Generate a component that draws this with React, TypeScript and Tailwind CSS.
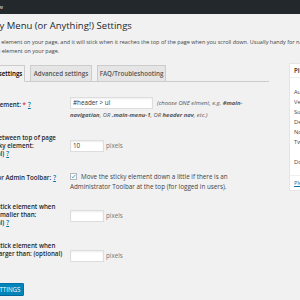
const Help = () => <a className="text-[#0073aa] underline ml-[2px]">?</a>

const Pixels = () => <span className="ml-[2px] text-[#777] text-[6.3px]">pixels</span>

function TextBox({ value, w }: { value?: string; w: string }) {
  return (
    <div className={`${w} h-[12px] bg-white border border-[#ddd] shadow-[inset_0_1px_2px_rgba(0,0,0,0.07)] flex items-center px-[2px] text-[6.3px] text-[#32373c] shrink-0`}>
      {value}
    </div>
  )
}

export default function App() {
  return (
    <div className="w-[300px] h-[300px] overflow-hidden bg-[#f1f1f1] font-['Open_Sans',sans-serif] text-[#444]">
      <div className="h-[14px] bg-[#23282d] flex items-center text-[#eee] text-[5.7px] whitespace-nowrap">
        <span className="-ml-[9px]">New</span>
      </div>

      <div className="-ml-[21px] w-[460px]">
        <h1 className="mt-[6px] text-[9.5px] leading-[12px] text-[#23282d] whitespace-nowrap">
          Sticky Menu (or Anything!) Settings
        </h1>
        <p className="mt-[6px] text-[5.5px] leading-[9px] whitespace-nowrap">
          Pick any element on your page, and it will stick when it reaches the top of the page when you scroll down. Usually handy for navigation menus, but can be any
          <br />
          (unique) element on your page.
        </p>

        <div className="mt-[7px] flex items-start">
          <div className="w-[290px] shrink-0">
            {/* tabs */}
            <div className="mt-[2px] flex items-end border-b border-[#ccc] text-[6.2px] font-semibold whitespace-nowrap">
              <div className="w-[46px] h-[17px] -mb-px border border-[#ccc] border-b-[#f1f1f1] bg-[#f1f1f1] text-[#000] flex items-center justify-center">
                Basic settings
              </div>
              <div className="ml-[5px] w-[62px] h-[17px] -mb-px border border-[#ccc] bg-[#e5e5e5] text-[#555] flex items-center justify-center">
                Advanced settings
              </div>
              <div className="ml-[5px] w-[69px] h-[17px] -mb-px border border-[#ccc] bg-[#e5e5e5] text-[#555] flex items-center justify-center">
                FAQ/Troubleshooting
              </div>
            </div>

            {/* form */}
            <div className="text-[6.2px] leading-[8px] whitespace-nowrap">
              <div className="mt-[15px] flex">
                <div className="-ml-[3.5px] w-[94.5px] pt-[4px] font-semibold text-[#23282d]">
                  Sticky Element: <span className="text-[#dc3232]">*</span>
                  <Help />
                </div>
                <div>
                  <div className="flex items-center">
                    <TextBox value="#header > ul" w="w-[83px]" />
                    <span className="ml-[4px] italic text-[5.9px] text-[#555]">
                      (choose ONE elment, e.g. <b>#main-</b>
                    </span>
                  </div>
                  <div className="mt-[2px] italic text-[5.9px] text-[#555]">
                    <b>navigation</b>, OR <b>.main-menu-1</b>, OR <b>header nav</b>, etc.)
                  </div>
                </div>
              </div>

              <div className="mt-[15px] flex">
                <div className="-ml-[3.5px] w-[94.5px] font-semibold text-[#23282d]">
                  Space between top of page
                  <br />
                  and sticky element:
                  <br />
                  (optional)
                  <Help />
                </div>
                <div className="pt-[6px] flex items-start">
                  <div className="flex items-center">
                    <TextBox value="10" w="w-[34px]" />
                    <Pixels />
                  </div>
                </div>
              </div>

              <div className="mt-[14px] flex">
                <div className="-ml-[3.5px] w-[94.5px] pt-[2px] font-semibold text-[#23282d]">
                  Check for Admin Toolbar:
                  <Help />
                </div>
                <div className="text-[6.3px] leading-[10px] text-[#444]">
                  <span className="inline-flex align-middle -mt-[2px] w-[7px] h-[7px] mr-[4px] bg-white border border-[#b4b9be] items-center justify-center">
                    <svg viewBox="0 0 10 10" className="w-[7px] h-[7px]">
                      <path d="M1.5 5.2 L4 7.6 L8.6 1.8" fill="none" stroke="#1e8cbe" strokeWidth="1.6" />
                    </svg>
                  </span>
                  Move the sticky element down a little if there is an
                  <br />
                  Administrator Toolbar at the top (for logged in users).
                </div>
              </div>

              <div className="mt-[11px] flex">
                <div className="-ml-[3.5px] w-[94.5px] font-semibold text-[#23282d]">
                  Do not stick element when
                  <br />
                  screen smaller than:
                  <br />
                  (optional)
                  <Help />
                </div>
                <div className="pt-[7px] flex items-start">
                  <div className="flex items-center">
                    <TextBox w="w-[34px]" />
                    <Pixels />
                  </div>
                </div>
              </div>

              <div className="mt-[15px] flex">
                <div className="-ml-[3.5px] w-[94.5px] font-semibold text-[#23282d]">
                  Do not stick element when
                  <br />
                  screen larger than: (optional)
                </div>
                <div className="pt-[8px] flex items-start">
                  <div className="flex items-center">
                    <TextBox w="w-[34px]" />
                    <Pixels />
                  </div>
                </div>
              </div>

              <div className="mt-[21px]">
                <button className="-ml-[6px] w-[51px] h-[13px] rounded-[1.5px] bg-[#0085ba] border border-[#0073aa] border-b-[#006799] text-white text-[6.2px] flex items-center justify-center">
                  SAVE SETTINGS
                </button>
              </div>
            </div>
          </div>

          {/* sidebar */}
          <div className="ml-[20px] w-[123px] bg-white border border-[#e5e5e5] whitespace-nowrap">
            <div className="h-[14px] border-b border-[#eee] flex items-center px-[4px] text-[6.2px] font-semibold text-[#23282d]">
              Plugin info
            </div>
            <div className="px-[4px] pt-[9px] text-[5.7px] leading-[10px] text-[#444]">
              <div>Author: Mark Senff</div>
              <div>Version: 2.1.1</div>
              <div>Support: WordPress.org</div>
              <div>Demo: Click here</div>
              <div>Notes: see FAQ</div>
              <div>Twitter: @markwaregames</div>
              <div className="h-[10px]" />
              <div>Donate: Buy me a beer</div>
            </div>
            <div className="mt-[8px] border-t border-[#eee] px-[4px] pt-[2px] pb-[2px] text-[5.7px] leading-[10px]">
              <a className="text-[#0073aa] underline">Please rate this plugin!</a>
            </div>
          </div>
        </div>
      </div>
    </div>
  )
}
